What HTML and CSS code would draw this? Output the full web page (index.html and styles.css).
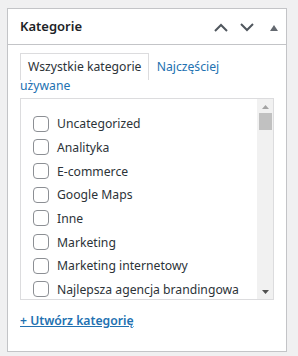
FILE: index.html
```html
<!DOCTYPE html>
<html lang="pl">
<head>
  <meta charset="utf-8" />
  <title>Kategorie</title>
  <link rel="stylesheet" href="styles.css">
</head>
<body>
<div class="postbox">
  <div class="postbox-header">
    <h2>Kategorie</h2>
    <div class="handle-actions">
      <svg class="icon" width="14" height="9" viewBox="0 0 14 9"><path d="M1 8 L7 2 L13 8" fill="none" stroke="#50575e" stroke-width="2"/></svg>
      <svg class="icon" width="14" height="9" viewBox="0 0 14 9"><path d="M1 1 L7 7 L13 1" fill="none" stroke="#50575e" stroke-width="2"/></svg>
      <svg class="icon toggle" width="8" height="6" viewBox="0 0 8 6"><path d="M0 6 L4 0 L8 6 Z" fill="#646970"/></svg>
    </div>
  </div>
  <div class="inside">
    <div class="category-tabs"><span class="tab active">Wszystkie kategorie</span> <a href="#" class="tab-link">Najczęściej używane</a></div>
    <div class="tabs-panel">
      <ul class="categorychecklist">
        <li><label><span class="check"></span>Uncategorized</label></li>
        <li><label><span class="check"></span>Analityka</label></li>
        <li><label><span class="check"></span>E-commerce</label></li>
        <li><label><span class="check"></span>Google Maps</label></li>
        <li><label><span class="check"></span>Inne</label></li>
        <li><label><span class="check"></span>Marketing</label></li>
        <li><label><span class="check"></span>Marketing internetowy</label></li>
        <li><label><span class="check"></span>Najlepsza agencja brandingowa</label></li>
      </ul>
      <div class="scrollbar">
        <svg width="7" height="4" viewBox="0 0 7 4"><path d="M0 4 L3.5 0 L7 4 Z" fill="#a3a3a3"/></svg>
        <div class="thumb"></div>
        <div class="track"></div>
        <svg width="7" height="4" viewBox="0 0 7 4"><path d="M0 0 L3.5 4 L7 0 Z" fill="#505050"/></svg>
      </div>
    </div>
    <p class="adder"><a href="#">+ Utwórz kategorię</a></p>
  </div>
</div>
</body>
</html>
```

FILE: styles.css
```css
*{margin:0;padding:0;box-sizing:border-box;}
body{background:#f0f0f1;font-family:"Noto Sans",sans-serif;font-size:12.2px;color:#3c434a;padding:8px 11px 4px 7px;}
.postbox{background:#fff;border:1px solid #c3c4c7;height:344px;}
.postbox-header{display:flex;align-items:center;justify-content:space-between;border-bottom:1px solid #c3c4c7;height:36px;padding:0 8px 0 12px;}
.postbox-header h2{font-size:13px;font-weight:600;color:#1d2327;line-height:19px;}
.handle-actions{display:flex;align-items:center;gap:12px;padding-top:2px;}
.handle-actions .toggle{margin-left:4px;}
.inside{padding:0 12px;}
.category-tabs{margin-top:12px;line-height:19px;width:210px;}
.tab{padding:4px 7px 5px;border:1px solid #dcdcde;border-bottom:0;color:#2c3338;}
.tab-link{color:#2271b1;text-decoration:none;margin-left:4px;}
.tabs-panel{display:flex;margin-top:3px;height:202px;border:1px solid #dcdcde;overflow:hidden;}
.categorychecklist{list-style:none;flex:1;padding:13px 0 0 12px;}
.categorychecklist li{height:23.65px;display:flex;align-items:center;white-space:nowrap;color:#2c3338;}
.categorychecklist label{display:flex;align-items:center;}
.check{width:16px;height:16px;border:1px solid #8c8f94;border-radius:4px;margin-right:8px;flex:none;}
.scrollbar{width:16px;background:#f1f1f1;display:flex;flex-direction:column;align-items:center;padding:6px 0 5px;}
.thumb{width:13px;height:17px;background:#c1c1c1;margin-top:4px;}
.track{flex:1;}
.adder{margin-top:11px;font-weight:600;line-height:19px;}
.adder a{color:#2271b1;text-decoration:underline;}
```
